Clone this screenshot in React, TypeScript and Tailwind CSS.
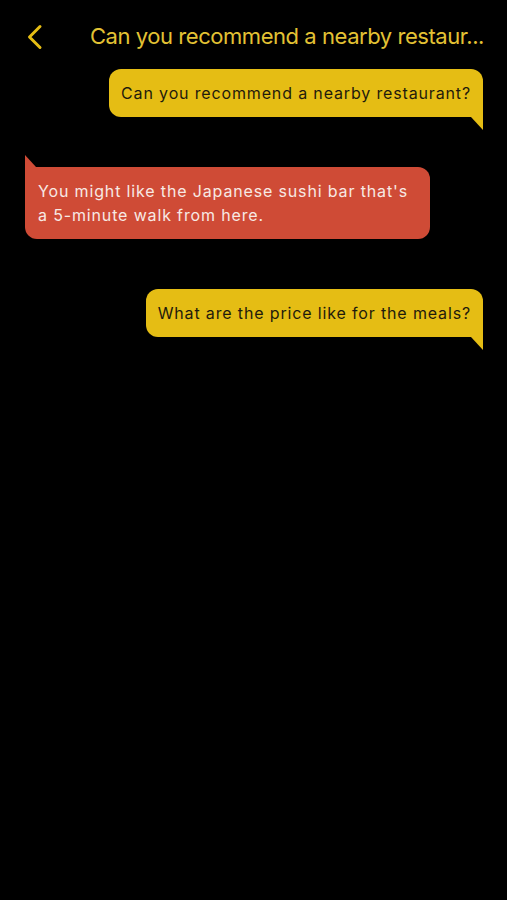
type Message = {
  id: number;
  from: "me" | "bot";
  text: string;
};

const messages: Message[] = [
  { id: 1, from: "me", text: "Can you recommend a nearby restaurant?" },
  { id: 2, from: "bot", text: "You might like the Japanese sushi bar that's a 5-minute walk from here." },
  { id: 3, from: "me", text: "What are the price like for the meals?" },
];

function Bubble({ message }: { message: Message }) {
  if (message.from === "me") {
    return (
      <div className="flex justify-end">
        <div className="relative rounded-xl rounded-br-none bg-[#e5bd14] px-3 py-3 text-[16px] leading-6 tracking-[0.85px] text-[#1f1b0c]">
          {message.text}
          <div className="absolute right-0 top-full h-[13px] w-[12px] bg-[#e5bd14] [clip-path:polygon(0_0,100%_0,100%_100%)]" />
        </div>
      </div>
    );
  }

  return (
    <div className="flex justify-start">
      <div className="relative w-[405px] rounded-xl rounded-tl-none bg-[#cf4b36] py-3 pl-[13px] pr-3 text-[16px] leading-6 tracking-[0.85px] text-[#f7e9e4]">
        {message.text}
        <div className="absolute bottom-full left-0 h-[12px] w-[11px] bg-[#cf4b36] [clip-path:polygon(0_0,0_100%,100%_100%)]" />
      </div>
    </div>
  );
}

export default function App() {
  return (
    <div className="min-h-[900px] w-full bg-black font-['Inter','Liberation_Sans',sans-serif]">
      <header className="flex h-[69px] items-center pl-[26px] pr-4 pt-[4px]">
        <svg width="17" height="26" viewBox="0 0 17 26" fill="none" className="shrink-0">
          <path d="M14 2.5 L3.5 13 L14 23.5" stroke="#e5bd14" strokeWidth="3" strokeLinecap="round" strokeLinejoin="round" />
        </svg>
        <h1 className="ml-[47px] whitespace-nowrap text-[22px] font-normal tracking-[-0.45px] text-[#e3c234]">
          Can you recommend a nearby restaur...
        </h1>
      </header>

      <main className="flex flex-col gap-[50px] pl-[25px] pr-6">
        {messages.map((message) => (
          <Bubble key={message.id} message={message} />
        ))}
      </main>
    </div>
  );
}
